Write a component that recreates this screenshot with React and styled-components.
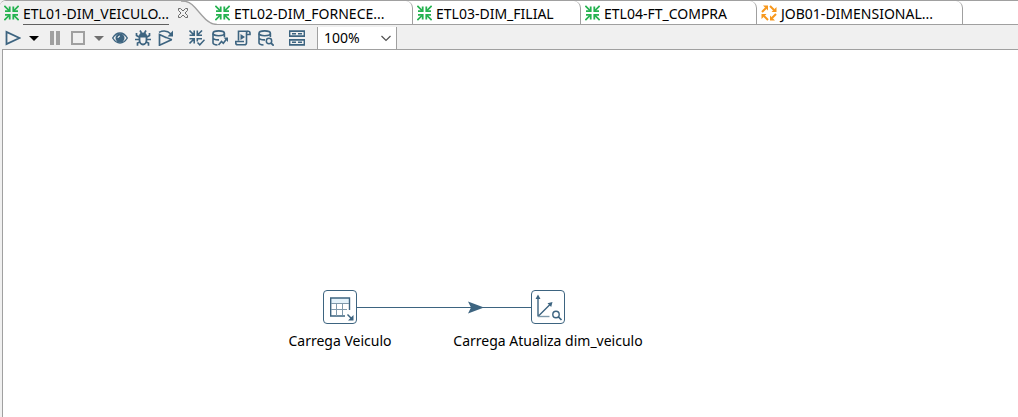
import React, { useState } from "react";
import styled, { createGlobalStyle, css } from "styled-components";

const ink = "#3d6480";
const line = "#a0a0a0";

const GlobalStyle = createGlobalStyle`
  * { box-sizing: border-box; }
  html, body, #root { height: 100%; }
  body { margin: 0; background: #fff; color: #000; }
  body, button, select {
    font-family: "Noto Sans", "Open Sans", sans-serif;
    font-size: 14px;
    line-height: 20px;
  }
  button { padding: 0; border: 0; background: none; color: inherit; }
  svg { display: block; flex: none; }
`;

const Window = styled.div`
  display: flex;
  flex-direction: column;
  min-height: 100%;
  background: #f0f0f0;
`;

const TabStrip = styled.div`
  display: flex;
  height: 25px;
  background: #fff;
  border-top: 1px solid ${line};
  border-top-left-radius: 6px;
  box-shadow: inset 0 -1px 0 ${line};
`;

const Tab = styled.div`
  display: flex;
  flex: none;
  width: ${(p) => p.$width}px;
  padding-left: 4px;
  ${(p) =>
    p.$active
      ? css`
          background: #f0f0f0;
          border-top-left-radius: 6px;
        `
      : css`
          border-right: 1px solid ${line};
          border-top-right-radius: 7px;
        `}
`;

const TabButton = styled.button`
  display: flex;
  align-items: center;
  gap: 4px;
  height: 24px;
  white-space: nowrap;
`;

const TabLabel = styled.span`
  height: 24px;
  line-height: 25px;
  border-bottom: 1px solid ${(p) => (p.$active ? "#606060" : "transparent")};
`;

const CloseButton = styled.button`
  position: relative;
  display: flex;
  flex: none;
  align-items: center;
  width: 12px;
  height: 24px;
  margin-left: auto;
  margin-right: -8px;
  z-index: 1;
`;

const TabCurve = styled.svg`
  margin-right: -6px;
`;

const Toolbar = styled.div`
  display: flex;
  align-items: center;
  height: 24px;
  padding-left: 5px;
`;

const ToolGroup = styled.div`
  display: flex;
  gap: 7px;
  margin-right: ${(p) => p.$after}px;
`;

const ToolButton = styled.button`
  display: flex;
  align-items: center;
  justify-content: center;
  width: ${(p) => (p.$narrow ? 12 : 16)}px;
  height: 24px;
  padding-top: 2px;
`;

const ZoomBox = styled.label`
  display: flex;
  align-items: center;
  align-self: flex-end;
  width: 80px;
  height: 22px;
  padding-right: 5px;
  background: #fff;
  border: solid ${line};
  border-width: 0 1px;
`;

const ZoomSelect = styled.select`
  appearance: none;
  flex: 1;
  min-width: 0;
  height: 22px;
  padding: 0 0 0 6px;
  border: 0;
  outline: 0;
  background: transparent;
  color: #000;
`;

const Canvas = styled.main`
  position: relative;
  flex: 1;
  margin-left: 2px;
  background: #fff;
  border-top: 1px solid ${line};
  border-left: 1px solid ${line};
`;

const Step = styled.div`
  position: absolute;
  left: ${(p) => p.$x}px;
  top: ${(p) => p.$y}px;
  display: flex;
  flex-direction: column;
  align-items: center;
  gap: 7px;
  width: 200px;
  white-space: nowrap;
`;

const StepIcon = styled.div`
  width: 34px;
  height: 34px;
  background: #fff;
  border: 1px solid ${ink};
  border-radius: 4px;
`;

const Hop = styled.svg`
  position: absolute;
  left: ${(p) => p.$x}px;
  top: ${(p) => p.$y}px;
`;

const Icon = ({ children, w = 16, h = 16, color = ink }) => (
  <svg width={w} height={h} viewBox={`0 0 ${w} ${h}`} fill="none" stroke={color} strokeWidth="1.8" aria-hidden="true">
    {children}
  </svg>
);

const TransIcon = () => (
  <Icon w={15} color="#24b24f">
    <path strokeWidth="1.6" d="M.400 .900l5 5M14.600 .900l-5 5M.400 15.100l5-5M14.600 15.100l-5-5" />
    <path strokeWidth="1.800" d="M1 6.100H5.700V1.500M14 6.100H9.300V1.500M1 9.900H5.700v4.600M14 9.900H9.300v4.600" />
  </Icon>
);

const JobIcon = () => (
  <Icon color="#f7981d">
    <path strokeWidth="2" d="M1 7L5 3M9 1l4 4M15 9l-4 4M7 15l-4-4" />
    <path fill="#f7981d" stroke="none" d="M2 .500h5v5zM15.500 2v5h-5zM14 15.500H9v-5zM.500 14V9h5z" />
  </Icon>
);

const CloseIcon = () => (
  <Icon w={12} h={12} color="#6c6c6c">
    <path strokeWidth="1" d="M1.500 1.500h2L6 4l2.500-2.500h2v2L8 6l2.500 2.500v2h-2L6 8l-2.500 2.500h-2v-2L4 6 1.500 3.500z" />
  </Icon>
);

const Curve = () => (
  <TabCurve width="36" height="24" viewBox="0 0 36 24" aria-hidden="true">
    <path fill="#f0f0f0" d="M0 0h36v24H0z" />
    <path fill="#fff" d="M0 0C7 0 10 2 14 6.500L21 14.500C26 20.500 30 23.500 36 23.500V0z" />
    <path fill="none" stroke={line} strokeWidth="1.300" d="M0 0C7 0 10 2 14 6.500L21 14.500C26 20.500 30 23.500 36 23.500" />
  </TabCurve>
);

const Caret = ({ color }) => (
  <Icon w={12} color={color}>
    <path fill={color} stroke="none" d="M1 6h10L6 11z" />
  </Icon>
);

const Play = () => <Icon><path d="M1.500 2v12L14.500 8z" /></Icon>;
const Pause = () => <Icon><path fill={line} stroke="none" d="M3 1h4v14H3zM9 1h4v14H9z" /></Icon>;
const Stop = () => <Icon color={line}><path strokeWidth="2" d="M2 2h12v12H2z" /></Icon>;

const Eye = () => (
  <Icon>
    <path strokeWidth="1.400" d="M.700 8C3 4.200 5.500 3 8 3s5 1.200 7.300 5C13 11.800 10.500 13 8 13S3 11.800.700 8z" />
    <circle cx="8" cy="8" r="4.500" fill={ink} stroke="none" />
    <path stroke="#fff" strokeWidth="1" d="M6 8a2 2 0 0 1 2-2" />
  </Icon>
);

const Bug = () => (
  <Icon>
    <path d="M4.500 6.500h7V10a3.500 4.500 0 0 1-7 0z" />
    <path fill={ink} stroke="none" d="M4 6.500a4 4 0 0 1 8 0z" />
    <path strokeWidth="1.700" d="M5 .500l1.500 2.500M11 .500L9.500 3M4 7L1.500 5.500V3M12 7l2.500-1.500V3M4.500 9.500H0M11.500 9.500H16M5 12l-2.500 1V15.800M11 12l2.500 1V15.800" />
  </Icon>
);

const Replay = () => (
  <Icon>
    <path strokeWidth="1.700" d="M8.500 7.700L1.500 4.500v10.700L13.500 9.700" />
    <path strokeWidth="1.500" d="M1 2.300C5 .300 9.500 .500 13 4" />
    <path fill={ink} stroke="none" d="M15 .500v6H9.500z" />
    <path strokeWidth="1.500" d="M8 7.400l6 2.300" />
  </Icon>
);

const Verify = () => (
  <Icon>
    <path strokeWidth="1.600" d="M.500.500l4.500 4.500M13 .500L8.500 5M.500 13.500l4.500-4.500M.500 5.200h4.700V.500M13 5.200H8.300V.500M.500 8.700h4.700V13.500M8.300 11.500V8.700H13" />
    <path strokeWidth="1.500" d="M8.500 12.500l2.300 2.300 4.700-5" />
  </Icon>
);

const DbShape = () => (
  <>
    <ellipse cx="6.700" cy="3.300" rx="5.700" ry="2.400" strokeWidth="1.600" />
    <path strokeWidth="1.600" d="M1 3.500v9.300c0 1.200 2 2 4.500 2.200M12.400 3.500V7M1 8c.500 1.300 3 2 6 1.900" />
  </>
);

const DbImpact = () => (
  <Icon>
    <DbShape />
    <path strokeWidth="1.600" d="M6.500 15l3-3.500 1.800 1.800L14.500 9" />
    <path fill={ink} stroke="none" d="M11.500 7.500H16V12z" />
  </Icon>
);

const DbSearch = () => (
  <Icon>
    <DbShape />
    <circle cx="11" cy="11" r="2.700" strokeWidth="1.500" />
    <path d="M13 13l2.700 2.700" />
  </Icon>
);

const Script = () => (
  <Icon>
    <path strokeWidth="1.600" d="M3.500 10.500V1.200H13M11.500 11V3c0-1 .500-1.800 1.700-1.800S15 2 15 3v1.500h-3M9 11.500H.800V13c0 1 .800 1.800 2 1.800h6.700c1.300 0 2-.800 2-2V10" />
    <path fill={ink} stroke="none" d="M5.500 4v6L10 7z" />
  </Icon>
);

const Results = () => (
  <Icon>
    <path strokeWidth="1.800" d="M.500 1.200h15v5H.500zM.500 9.800h15v5H.500z" />
    <path strokeWidth="1.400" d="M3 3.700h4M9 3.700h4M3 12.300h4M9 12.300h4" />
  </Icon>
);

const TableInput = () => (
  <Icon w={32} h={32}>
    <path fill="#e4f2fa" stroke="none" d="M7 7h19v6H7z" />
    <path strokeWidth="1.400" d="M21 25H6.700V7H25.500V19" />
    <path strokeWidth="1" stroke="#7f99ab" d="M7 12.500h18M7 18.500h16M12.500 12.500V25M18.500 12.500V24" />
    <path strokeWidth="1.500" d="M23.500 23.500l4.500 4.500" />
    <path fill={ink} stroke="none" d="M29.500 24v5.500H24z" />
  </Icon>
);

const Dimension = () => (
  <Icon w={32} h={32}>
    <path strokeWidth="1.400" d="M6 6v19.500M6 25.500L18.500 13" />
    <path strokeWidth="1.400" stroke="#7f99ab" d="M6 25.500H17.500" />
    <path fill={ink} stroke="none" d="M6 3.500L8.500 8H3.500zM20.500 11l-1.300 5L15.500 12.300z" />
    <circle cx="24" cy="23.500" r="3.200" strokeWidth="1.400" />
    <path strokeWidth="1.700" d="M26 25.500l3.500 3.500" />
  </Icon>
);

const tabs = [
  { label: "ETL02-DIM_FORNECE...", width: 202, icon: TransIcon },
  { label: "ETL03-DIM_FILIAL", width: 168, icon: TransIcon },
  { label: "ETL04-FT_COMPRA", width: 176, icon: TransIcon },
  { label: "JOB01-DIMENSIONAL...", width: 206, icon: JobIcon },
];

const Tool = ({ label, icon: Glyph, narrow, color }) => (
  <ToolButton type="button" aria-label={label} $narrow={narrow}>
    <Glyph color={color} />
  </ToolButton>
);

export default function App() {
  const [zoom, setZoom] = useState("100%");
  return (
    <Window>
      <GlobalStyle />
      <TabStrip>
        <Tab $active $width={181}>
          <TabButton type="button">
            <TransIcon />
            <TabLabel $active>ETL01-DIM_VEICULO...</TabLabel>
          </TabButton>
          <CloseButton type="button" aria-label="Close tab">
            <CloseIcon />
          </CloseButton>
        </Tab>
        <Curve />
        {tabs.map(({ label, width, icon: Glyph }) => (
          <Tab key={label} $width={width}>
            <TabButton type="button">
              <Glyph />
              <TabLabel>{label}</TabLabel>
            </TabButton>
          </Tab>
        ))}
      </TabStrip>
      <Toolbar>
        <ToolGroup $after={7}>
          <Tool label="Run" icon={Play} />
          <Tool label="Run options" icon={Caret} narrow color="#000" />
          <Tool label="Pause" icon={Pause} />
          <Tool label="Stop" icon={Stop} />
          <Tool label="Stop options" icon={Caret} narrow color="#707070" />
        </ToolGroup>
        <ToolGroup $after={15}>
          <Tool label="Preview" icon={Eye} />
          <Tool label="Debug" icon={Bug} />
          <Tool label="Replay" icon={Replay} />
        </ToolGroup>
        <ToolGroup $after={15}>
          <Tool label="Verify" icon={Verify} />
          <Tool label="Impact analysis" icon={DbImpact} />
          <Tool label="Generate SQL" icon={Script} />
          <Tool label="Explore database" icon={DbSearch} />
        </ToolGroup>
        <ToolGroup $after={12}>
          <Tool label="Show results" icon={Results} />
        </ToolGroup>
        <ZoomBox>
          <ZoomSelect aria-label="Zoom" value={zoom} onChange={(e) => setZoom(e.target.value)}>
            <option>50%</option>
            <option>100%</option>
            <option>200%</option>
          </ZoomSelect>
          <Icon w={10} h={10} color="#505050">
            <path strokeWidth="1.200" d="M.500 3L5 7.500 9.500 3" />
          </Icon>
        </ZoomBox>
      </Toolbar>
      <Canvas>
        <Hop $x={354} $y={249} width="174" height="16" viewBox="0 0 174 16" aria-hidden="true">
          <path stroke={ink} d="M0 8.500h174" />
          <path fill={ink} d="M111 2.500l16 6-16 6 3-6z" />
        </Hop>
        <Step $x={237} $y={240}>
          <StepIcon><TableInput /></StepIcon>
          <span>Carrega Veiculo</span>
        </Step>
        <Step $x={445} $y={240}>
          <StepIcon><Dimension /></StepIcon>
          <span>Carrega Atualiza dim_veiculo</span>
        </Step>
      </Canvas>
    </Window>
  );
}
